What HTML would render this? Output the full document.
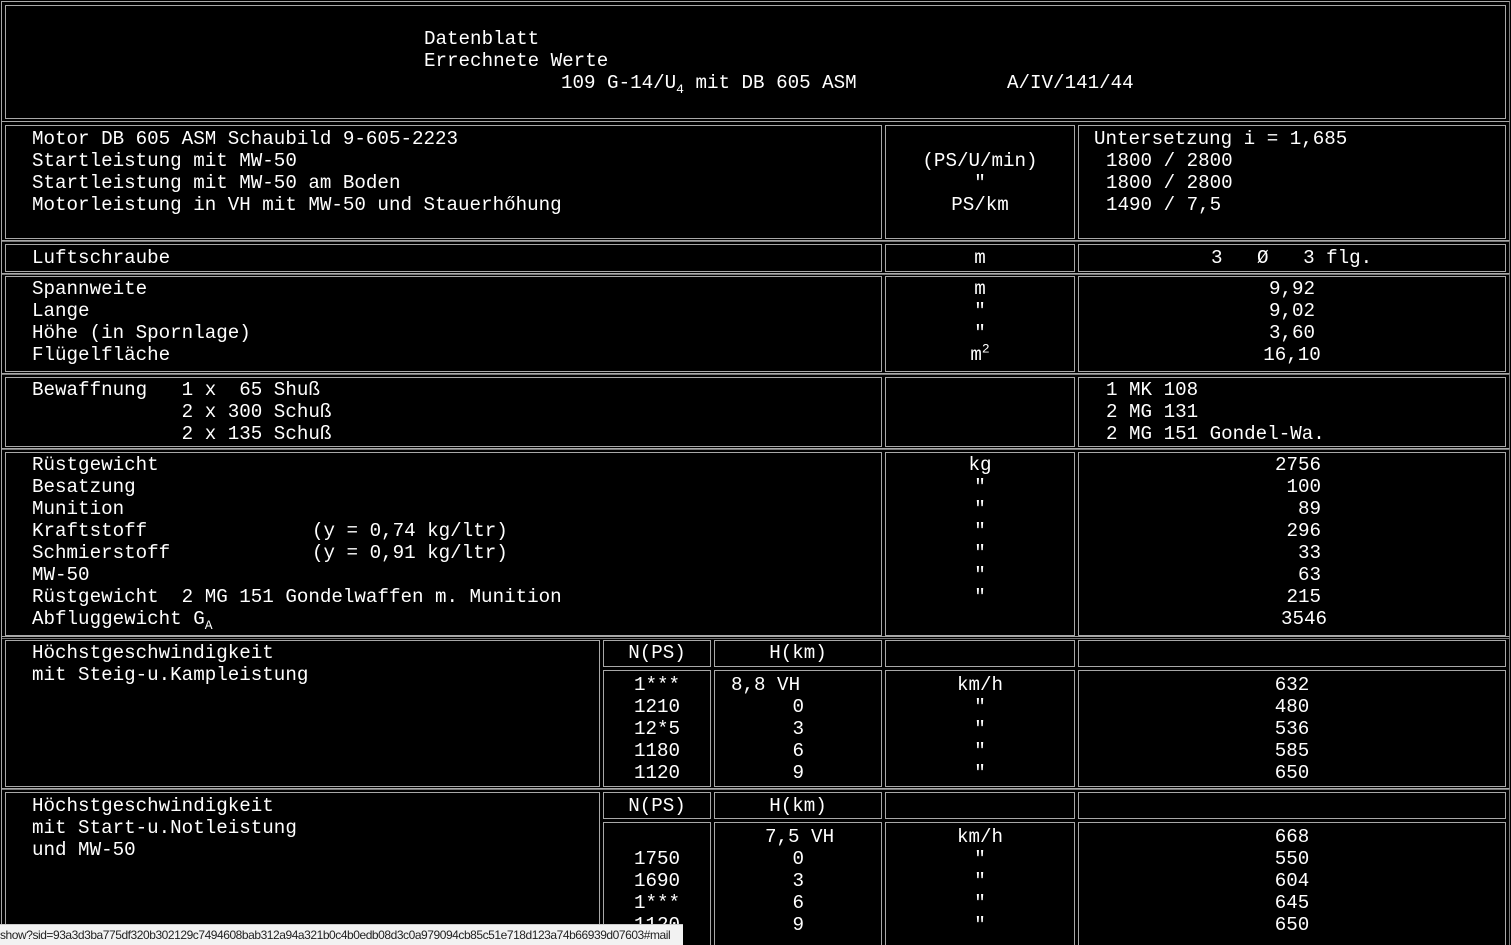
<!DOCTYPE html>
<html><head><meta charset="utf-8"><style>
html,body{margin:0;padding:0;background:#000;width:1511px;height:945px;overflow:hidden;position:relative}
.b{position:absolute;border:1px solid #a8a8a8;box-sizing:border-box}
.o{position:absolute;border:1px solid #a8a8a8;border-right-color:#777;border-bottom-color:#777;box-sizing:border-box}
.t{position:absolute;font-family:"Liberation Mono","Courier New",monospace;font-size:19.2px;line-height:22px;color:#fff;white-space:pre}
.c{text-align:center;width:190px}
.r{text-align:right}
sub,sup{font-size:13px;line-height:0}
#st{position:absolute;left:0;top:924px;width:683px;height:21px;background:#f2f2f2;border-top:1px solid #ccc;font-family:"Liberation Sans",sans-serif;font-size:12px;letter-spacing:-0.45px;line-height:20px;color:#222;white-space:nowrap;overflow:hidden}
</style></head><body>
<div class="o" style="left:1px;top:1px;width:1509px;height:121px"></div>
<div class="o" style="left:1px;top:121px;width:1509px;height:121px"></div>
<div class="o" style="left:1px;top:240px;width:1509px;height:35px"></div>
<div class="o" style="left:1px;top:273px;width:1509px;height:102px"></div>
<div class="o" style="left:1px;top:373px;width:1509px;height:77px"></div>
<div class="o" style="left:1px;top:448px;width:1509px;height:191px"></div>
<div class="o" style="left:1px;top:636px;width:1509px;height:154px"></div>
<div class="o" style="left:1px;top:788px;width:1509px;height:160px"></div>
<div class="b" style="left:5px;top:5px;width:1501px;height:114px"></div>
<div class="b" style="left:5px;top:125px;width:877px;height:114px"></div>
<div class="b" style="left:885px;top:125px;width:190px;height:114px"></div>
<div class="b" style="left:1078px;top:125px;width:428px;height:114px"></div>
<div class="b" style="left:5px;top:244px;width:877px;height:28px"></div>
<div class="b" style="left:885px;top:244px;width:190px;height:28px"></div>
<div class="b" style="left:1078px;top:244px;width:428px;height:28px"></div>
<div class="b" style="left:5px;top:276px;width:877px;height:96px"></div>
<div class="b" style="left:885px;top:276px;width:190px;height:96px"></div>
<div class="b" style="left:1078px;top:276px;width:428px;height:96px"></div>
<div class="b" style="left:5px;top:377px;width:877px;height:70px"></div>
<div class="b" style="left:885px;top:377px;width:190px;height:70px"></div>
<div class="b" style="left:1078px;top:377px;width:428px;height:70px"></div>
<div class="b" style="left:5px;top:452px;width:877px;height:184px"></div>
<div class="b" style="left:885px;top:452px;width:190px;height:184px"></div>
<div class="b" style="left:1078px;top:452px;width:428px;height:184px"></div>
<div class="b" style="left:5px;top:640px;width:595px;height:147px"></div>
<div class="b" style="left:603px;top:640px;width:108px;height:27px"></div>
<div class="b" style="left:714px;top:640px;width:168px;height:27px"></div>
<div class="b" style="left:885px;top:640px;width:190px;height:27px"></div>
<div class="b" style="left:1078px;top:640px;width:428px;height:27px"></div>
<div class="b" style="left:603px;top:670px;width:108px;height:117px"></div>
<div class="b" style="left:714px;top:670px;width:168px;height:117px"></div>
<div class="b" style="left:885px;top:670px;width:190px;height:117px"></div>
<div class="b" style="left:1078px;top:670px;width:428px;height:117px"></div>
<div class="b" style="left:5px;top:792px;width:595px;height:160px"></div>
<div class="b" style="left:603px;top:792px;width:108px;height:27px"></div>
<div class="b" style="left:714px;top:792px;width:168px;height:27px"></div>
<div class="b" style="left:885px;top:792px;width:190px;height:27px"></div>
<div class="b" style="left:1078px;top:792px;width:428px;height:27px"></div>
<div class="b" style="left:603px;top:822px;width:108px;height:130px"></div>
<div class="b" style="left:714px;top:822px;width:168px;height:130px"></div>
<div class="b" style="left:885px;top:822px;width:190px;height:130px"></div>
<div class="b" style="left:1078px;top:822px;width:428px;height:130px"></div>

<div class="t" style="left:424px;top:28px">Datenblatt
Errechnete Werte</div>
<div class="t" style="left:561px;top:72px">109 G-14/U<sub>4</sub> mit DB 605 ASM</div>
<div class="t" style="left:1007px;top:72px">A/IV/141/44</div>

<div class="t" style="left:32px;top:128px">Motor DB 605 ASM Schaubild 9-605-2223
Startleistung mit MW-50
Startleistung mit MW-50 am Boden
Motorleistung in VH mit MW-50 und Stauerhőhung</div>
<div class="t c" style="left:885px;top:150px">(PS/U/min)
"
PS/km</div>
<div class="t" style="left:1094px;top:128px">Untersetzung i = 1,685</div>
<div class="t" style="left:1106px;top:150px">1800 / 2800
1800 / 2800
1490 / 7,5</div>

<div class="t" style="left:32px;top:247px">Luftschraube</div>
<div class="t c" style="left:885px;top:247px">m</div>
<div class="t" style="left:1211px;top:247px">3   Ø   3 flg.</div>

<div class="t" style="left:32px;top:278px">Spannweite
Lange
Höhe (in Spornlage)
Flügelfläche</div>
<div class="t c" style="left:885px;top:278px">m
"
"
m<sup>2</sup></div>
<div class="t c" style="left:1197px;top:278px">9,92
9,02
3,60
16,10</div>

<div class="t" style="left:32px;top:379px">Bewaffnung   1 x  65 Shuß
             2 x 300 Schuß
             2 x 135 Schuß</div>
<div class="t" style="left:1106px;top:379px">1 MK 108
2 MG 131
2 MG 151 Gondel-Wa.</div>

<div class="t" style="left:32px;top:454px">Rüstgewicht
Besatzung
Munition
Kraftstoff
Schmierstoff
MW-50
Rüstgewicht  2 MG 151 Gondelwaffen m. Munition
Abfluggewicht G<sub>A</sub></div>
<div class="t" style="left:312px;top:520px">(y = 0,74 kg/ltr)
(y = 0,91 kg/ltr)</div>
<div class="t c" style="left:885px;top:454px">kg
"
"
"
"
"
"</div>
<div class="t r" style="left:1200px;width:121px;top:454px">2756
100
89
296
33
63
215</div>
<div class="t r" style="left:1200px;width:127px;top:608px">3546</div>

<div class="t" style="left:32px;top:642px">Höchstgeschwindigkeit
mit Steig-u.Kampleistung</div>
<div class="t" style="left:603px;width:108px;text-align:center;top:642px">N(PS)</div>
<div class="t" style="left:714px;width:168px;text-align:center;top:642px">H(km)</div>
<div class="t" style="left:603px;width:108px;text-align:center;top:674px">1***
1210
12*5
1180
1120</div>
<div class="t" style="left:731px;top:674px">8,8 VH</div>
<div class="t r" style="left:714px;width:90px;top:696px">0
3
6
9</div>
<div class="t c" style="left:885px;top:674px">km/h
"
"
"
"</div>
<div class="t c" style="left:1197px;top:674px">632
480
536
585
650</div>

<div class="t" style="left:32px;top:795px">Höchstgeschwindigkeit
mit Start-u.Notleistung
und MW-50</div>
<div class="t" style="left:603px;width:108px;text-align:center;top:795px">N(PS)</div>
<div class="t" style="left:714px;width:168px;text-align:center;top:795px">H(km)</div>
<div class="t" style="left:765px;top:826px">7,5 VH</div>
<div class="t" style="left:603px;width:108px;text-align:center;top:848px">1750
1690
1***
1120</div>
<div class="t r" style="left:714px;width:90px;top:848px">0
3
6
9</div>
<div class="t c" style="left:885px;top:826px">km/h
"
"
"
"</div>
<div class="t c" style="left:1197px;top:826px">668
550
604
645
650</div>

<div id="st">show?sid=93a3d3ba775df320b302129c7494608bab312a94a321b0c4b0edb08d3c0a979094cb85c51e718d123a74b66939d07603#mail</div>
</body></html>
